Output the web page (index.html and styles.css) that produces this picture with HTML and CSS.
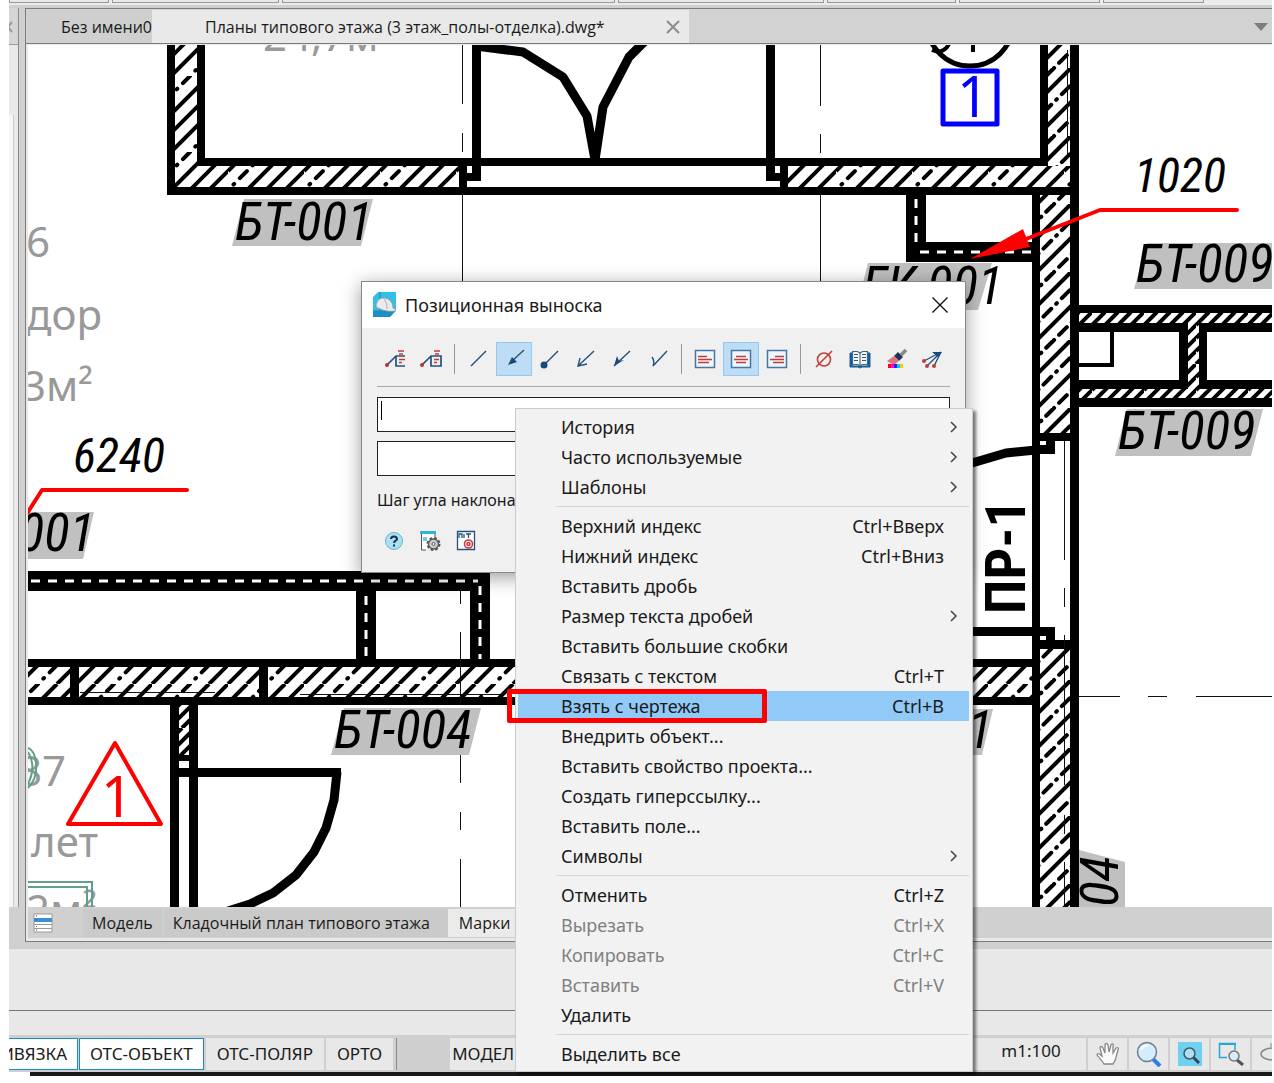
FILE: index.html
```html
<!DOCTYPE html>
<html lang="ru">
<head>
<meta charset="utf-8">
<title>Позиционная выноска</title>
<link rel="stylesheet" href="styles.css">
</head>
<body>
<div class="app">
  <div class="ribbon">
    <span class="r1"></span><span class="r2"></span><span class="r3"></span><span class="r4"></span><span class="r5"></span><span class="r6"></span><span class="r7"></span>
  </div>

  <div class="workspace">
    <aside class="side">
      <div class="side-head">
        <svg width="8" height="14" viewBox="0 0 8 14"><path d="M-6 1L3 12M3 2L-6 13" stroke="#999" stroke-width="2" fill="none"/></svg>
      </div>
      <div class="side-body"></div>
    </aside>
    <main class="document">
      <nav class="file-tabs">
        <button class="file-tab first">Без имени0</button>
        <button class="file-tab active">Планы типового этажа (3 этаж_полы-отделка).dwg*
          <svg width="14" height="14" viewBox="0 0 14 14"><path d="M1 1L13 13M13 1L1 13" stroke="#8c8c8c" stroke-width="2" fill="none"/></svg>
        </button>
        <svg class="tab-more" width="14" height="8" viewBox="0 0 14 8"><path d="M0 0H14L7 8Z" fill="#7d7d7d"/></svg>
      </nav>

      <div class="canvas">
        <svg class="plan" width="1244" height="862" viewBox="28 45 1244 862">
          <defs>
            <pattern id="hatch" width="76" height="76" patternUnits="userSpaceOnUse">
              <path d="M19 0L0 19M57 0L0 57M76 0L0 76M95 0L19 76M133 0L57 76M152 0L76 76" stroke="#000" stroke-width="4"/>
              <path d="M38 0L0 38M114 0L38 76" stroke="#000" stroke-width="4" stroke-linecap="round" stroke-dasharray="10 8 1 8"/>
            </pattern>
            <pattern id="hatch-dense" width="68" height="68" patternUnits="userSpaceOnUse">
              <path d="M17 0L0 17M51 0L0 51M85 0L17 68M119 0L51 68" stroke="#000" stroke-width="4"/>
              <path d="M34 0L0 34M68 0L0 68M102 0L34 68M136 0L68 68" stroke="#000" stroke-width="4" stroke-linecap="round" stroke-dasharray="11 7 1 7"/>
            </pattern>
            <pattern id="hatch-thin" width="52" height="52" patternUnits="userSpaceOnUse">
              <path d="M13 0L0 13M26 0L0 26M39 0L0 39M52 0L0 52M65 0L13 52M78 0L26 52M91 0L39 52M104 0L52 52" stroke="#000" stroke-width="4"/>
            </pattern>
          </defs>

          <!-- room captions -->
          <g class="room">
            <text x="263" y="51">24,7м²</text>
            <text x="26" y="257">6</text>
            <text x="26" y="330">дор</text>
            <text x="22" y="401">3м²</text>
            <text x="18" y="786">87</text>
            <text x="31" y="857">лет</text>
            <text x="26" y="925">2м²</text>
          </g>
          <path d="M28 882H92V907M28 887H87V907M28 748C38 752 40 776 28 788M28 752C34 762 34 772 28 784" class="green"/>

          <!-- tag backgrounds -->
          <path class="tag-bg" d="M244 199H373L361 246H232ZM868 263H992L978 310H856ZM1147 243H1284L1272 289H1134ZM1127 409H1263L1251 456H1115ZM-34 512H94L83 559H-46ZM344 708H481L469 755H331ZM860 709H993L982 755H850ZM1079 850L1125 862V907H1079Z"/>

          <!-- hatched walls -->
          <path fill="url(#hatch)" d="M175 45H197V166H459V187H175ZM788 166H1070V187H788ZM28 667H1032V697H28Z"/>
          <path fill="url(#hatch-dense)" d="M1048 45H1071V166H1048ZM1040 195H1070V433H1040ZM1040 649H1070V907H1040Z"/>
          <path fill="url(#hatch-thin)" d="M1079 313H1272V323H1079ZM1079 389H1272V398H1079ZM1188 323H1199V389H1188ZM179 705H189V755H179Z"/>

          <!-- wall outlines -->
          <path class="wall" d="M167 45H175V187H1070V45H1079V305H1272V313H1079V323H1188V389H1079V398H1272V407H1079V907H1070V195H1040V907H1032V195H926V242H1032V262H906V195H167Z"/>
          <path class="wall" d="M197 45H205V158H1040V45H1048V166H197Z"/>
          <path class="wall" d="M459 158H467V195H459ZM780 158H788V195H780ZM472 45H481V181H467V173H472ZM766 45H775V173H780V181H766Z"/>
          <path d="M1079 332H1179V380H1079ZM1207 332H1272V380H1207Z" fill="#fff"/>
          <path class="wall" d="M1199 323H1272V332H1207V380H1272V389H1199ZM1079 323H1188V332H1079ZM1079 380H1188V389H1079ZM1179 323H1188V389H1179Z"/>
          <path d="M1079 365H1112V332" fill="none" stroke="#000" stroke-width="4"/>
          <path class="wall" d="M28 571H490V659H1032V667H28V659H356V591H28ZM28 697H1032V705H28ZM70 659H79V705H70ZM259 659H268V705H259Z"/>
          <path d="M376 591H470V659H376Z" fill="#fff"/>
          <path class="wall" d="M170 705H179V907H170ZM189 705H198V907H189ZM179 755H189V761H179ZM170 768H341V777H170Z"/>
          <path class="wall" d="M1040 433H1070V441H1055V454H1032V445H1046V441H1040ZM972 627H1055V640H1070V649H1040V640H1046V636H972Z"/>
          <path class="ducts" d="M31 581H478M366 596V659M480 586V659"/>
          <path class="ducts" d="M916 199V248M920 252H1032"/>

          <!-- door leaves -->
          <path class="door" d="M476 46L523 52L563 77L587 116L595 160L603 107L629 57L645 41M972 463L1006 453L1036 450M337 772L334 800L326 828L314 852L296 875L273 893L250 904L228 911"/>

          <!-- axes -->
          <path class="axis" d="M462 45V104M462 133V152M462 195V290M820 45V106M820 134V153M820 195V290M460 591V604M460 632V705M460 755V783M460 812V830M460 859V907M1064 441V560M1064 588V607M1064 635V785M1064 815V834M1064 862V907M1079 696H1120M1148 696H1167M1196 696H1272M80 692H215M300 694H500M1067 50V158"/>

          <!-- round marker -->
          <circle cx="970" cy="23" r="43" fill="none" stroke="#000" stroke-width="5"/>
          <path d="M973 44V52M932 50Q943 55 949 44" stroke="#000" stroke-width="4" fill="none"/>

          <g class="tag">
            <text x="235" y="240">БТ-001</text>
            <text x="862" y="304">ГК-001</text>
            <text x="1136" y="282">БТ-009</text>
            <text x="1118" y="449">БТ-009</text>
            <text x="95" y="551" text-anchor="end">БТ-001</text>
            <text x="334" y="748">БТ-004</text>
            <text x="993" y="748" text-anchor="end">БТ-001</text>
            <text transform="translate(1118 856) rotate(-90)" text-anchor="end">БТ-004</text>
          </g>
          <g class="size">
            <text x="1134" y="192">1020</text>
            <text x="73" y="472">6240</text>
          </g>
          <text class="opening" transform="translate(1025 614) rotate(-90)">ПР-1</text>

          <rect x="943" y="71" width="54" height="53" fill="none" stroke="#00f" stroke-width="5" stroke-linejoin="round"/>
          <text class="mark" x="957" y="117" fill="#00f">1</text>

          <g class="leader">
            <path d="M1237 210H1100L1026 239M26 515L42 490H187M115 743L68 824H161Z"/>
          </g>
          <path d="M970 259L1023 229L1030 247Z" fill="#f00"/>
          <text class="mark" x="101" y="817" fill="#f00">1</text>
        </svg>
      </div>

      <nav class="sheet-tabs">
        <svg width="20" height="20" viewBox="0 0 20 20"><path d="M1 1H19V19H1Z" fill="#fff" stroke="#999"/><path d="M1 5H19V9H1Z" fill="#3c8fd0"/><path d="M1 11.500H19M1 15.500H19" stroke="#999"/><path d="M3 3H4M3 7H4M3 13.500H4M3 17H4" stroke="#456" stroke-width="1"/></svg>
        <button class="sheet">Модель</button>
        <button class="sheet">Кладочный план типового этажа</button>
        <button class="sheet active">Марки</button>
      </nav>
    </main>
  </div>

  <div class="command"></div>
  <div class="command-line"></div>

  <footer class="status">
    <button class="st on clipped">ПРИВЯЗКА</button>
    <button class="st on">ОТС-ОБЪЕКТ</button>
    <button class="st">ОТС-ПОЛЯР</button>
    <button class="st">ОРТО</button>
    <span class="st-line"></span>
    <button class="st model">МОДЕЛЬ</button>
    <div class="st-right">
      <button class="st scale">m1:100</button>
      <button class="st icon" aria-label="Панорама"><svg width="24" height="24" viewBox="0 0 24 24"><path d="M8 22C6 18 3 16 1 13C1 11 3 11 6 14L4 6C4 4 6 4 7 6L9 11L9 3C9 1 11 1 12 3L13 10L15 3C16 1 18 2 17 4L17 11L20 6C22 5 23 6 22 8L20 15C20 18 18 20 17 22Z" fill="#fafafa" stroke="#888" stroke-width="1.300"/></svg></button>
      <button class="st icon" aria-label="Масштаб"><svg width="26" height="26" viewBox="0 0 26 26"><path d="M16 17L24 25" stroke="#2a80e8" stroke-width="4"/><circle cx="11" cy="11" r="9.500" fill="#d3edfb" stroke="#6a7f92" stroke-width="1.500"/><path d="M5 9Q7 4 12 5" stroke="#fff" stroke-width="2" fill="none"/></svg></button>
      <button class="st icon" aria-label="Показать все"><svg width="24" height="24" viewBox="0 0 24 24"><path d="M0 0H24V24H0Z" fill="#6fd0f0"/><path d="M15 15L21 21" stroke="#345" stroke-width="3"/><circle cx="11.500" cy="11.500" r="5.500" fill="#a9e0f5" stroke="#456" stroke-width="1.500"/></svg></button>
      <button class="st icon" aria-label="Показать рамкой"><svg width="26" height="24" viewBox="0 0 26 24"><path d="M17 8V1.500H1.500V15.500H9" fill="none" stroke="#2aa5d5" stroke-width="1.500"/><path d="M1 1H18V3H1Z" fill="#2aa5d5"/><path d="M19 18L25 23" stroke="#555" stroke-width="3"/><circle cx="16" cy="14" r="5" fill="#d6eefa" stroke="#777" stroke-width="1.500"/></svg></button>
      <button class="st icon last" aria-label="Орбита"><svg width="24" height="24" viewBox="0 0 24 24"><ellipse cx="13" cy="12" rx="12" ry="6" fill="none" stroke="#888" stroke-width="1.500"/><path d="M11 1V5" stroke="#888"/></svg></button>
    </div>
  </footer>
  <div class="taskbar"></div>
</div>

<section class="dialog" role="dialog" aria-labelledby="dlg-title">
  <header class="dialog-head">
    <svg width="24" height="26" viewBox="0 0 24 26"><path d="M5 0H23V19L17 25H0V5Z" fill="#35bfe8"/><path d="M7 0V25M0 19H22" stroke="#1687b8" stroke-width="1"/><path d="M0 19H22L17 25H0Z" fill="#1f8ec4"/><path d="M3 15C3 8 8 5 12 6C18 7 20 12 20 16C23 17 23 18 22 19C16 20 10 19 3 15Z" fill="#e9ebec" stroke="#8b959b" stroke-width=".8"/><path d="M10 6Q14 9 14 17" stroke="#aab2b7" fill="none"/></svg>
    <h1 id="dlg-title">Позиционная выноска</h1>
    <button class="close" aria-label="Закрыть"><svg width="16" height="16" viewBox="0 0 16 16"><path d="M.5 .5L15.500 15.500M15.500 .5L.5 15.500" stroke="#111" stroke-width="1.400" fill="none"/></svg></button>
  </header>
  <div class="tools">
    <button aria-label="Выноска"><svg width="24" height="24" viewBox="0 0 24 24"><path d="M4 18L13 9H22M13 9V19H22" fill="none" stroke="#24527f" stroke-width="1.700"/><circle cx="4" cy="18" r="2" fill="#b33"/><path d="M15 4H21M16 7H20M16 12.500H22M16 15.500H19" stroke="#c33b3b" stroke-width="1.600"/></svg></button>
    <button aria-label="Выноска в рамке"><svg width="24" height="24" viewBox="0 0 24 24"><path d="M3 18L12 9H22V19H12V9" fill="none" stroke="#24527f" stroke-width="1.700"/><circle cx="3" cy="18" r="2" fill="#b33"/><path d="M15 4H21M16 7H20M15 12.500H20M15 15.500H18" stroke="#c33b3b" stroke-width="1.600"/></svg></button>
    <i></i>
    <button aria-label="Без стрелки"><svg width="24" height="24" viewBox="0 0 24 24"><path d="M5 19L20 4" class="ln"/></svg></button>
    <button class="on" aria-label="Стрелка"><svg width="24" height="24" viewBox="0 0 24 24"><path d="M9 15L22 3" class="ln"/><path d="M6 18L10 10L15 15Z" fill="#174a7c"/></svg></button>
    <button aria-label="Точка"><svg width="24" height="24" viewBox="0 0 24 24"><path d="M7 17L20 4" class="ln"/><circle cx="6" cy="18" r="3.500" fill="#174a7c"/></svg></button>
    <button aria-label="Открытая стрелка"><svg width="24" height="24" viewBox="0 0 24 24"><path d="M4 19L20 4M6 11L4 19L13 17" class="ln"/></svg></button>
    <button aria-label="Закрытая стрелка"><svg width="24" height="24" viewBox="0 0 24 24"><path d="M4 19L20 4" class="ln"/><path d="M4 19L7 9L9 14L14 13Z" fill="#174a7c"/></svg></button>
    <button aria-label="Полустрелка"><svg width="24" height="24" viewBox="0 0 24 24"><path d="M7 19L21 4M6 10Q9 14 7 19" class="ln"/></svg></button>
    <i></i>
    <button aria-label="Влево"><svg width="24" height="24" viewBox="0 0 24 24"><path d="M2.500 3.500H21.500V20.500H2.500Z" class="pg"/><path d="M5 9.500H14M5 12.500H19M5 15.500H16" class="rd"/></svg></button>
    <button class="on" aria-label="По центру"><svg width="24" height="24" viewBox="0 0 24 24"><path d="M2.500 3.500H21.500V20.500H2.500Z" class="pg"/><path d="M7 9.500H17M5 12.500H19M7 15.500H17" class="rd"/></svg></button>
    <button aria-label="Вправо"><svg width="24" height="24" viewBox="0 0 24 24"><path d="M2.500 3.500H21.500V20.500H2.500Z" class="pg"/><path d="M10 9.500H19M5 12.500H19M8 15.500H19" class="rd"/></svg></button>
    <i></i>
    <button aria-label="Диаметр"><svg width="24" height="24" viewBox="0 0 24 24"><circle cx="12" cy="12.500" r="6.500" class="rd" fill="none"/><path d="M4 20L20 4" class="rd"/></svg></button>
    <button aria-label="Справочник"><svg width="24" height="24" viewBox="0 0 24 24"><path d="M2 6H4V19H20V6H22V20H14L12 21L10 20H2Z" fill="#1b5c92" stroke="#1b5c92"/><path d="M4.500 4.500H9.500L12 6L14.500 4.500H19.500V17.500H14L12 19L10 17.500H4.500Z" fill="#eef5f8" stroke="#376b8d" stroke-width="1.200"/><path d="M12 6V18M6 7.500H10M6 10.500H10M6 13.500H10M14 7.500H18M14 10.500H18M14 13.500H18" stroke="#456"/></svg></button>
    <button aria-label="Кисть"><svg width="24" height="24" viewBox="0 0 24 24"><path d="M17 8L22 3" stroke="#888" stroke-width="3.500"/><path d="M10 9L14 5L19 10L15 14Z" fill="#20335c"/><path d="M3 14L10 9L15 14L10 18Z" fill="#e4717a"/><path d="M4 17H7V21H4Z" fill="#f00"/><path d="M7 17H10V21H7Z" fill="#f0f"/><path d="M10 17H13V21H10Z" fill="#22f"/><path d="M13 17H16V21H13Z" fill="#0ce"/><path d="M16 17H19V21H16Z" fill="#fc0"/></svg></button>
    <button aria-label="Несколько выносок"><svg width="24" height="24" viewBox="0 0 24 24"><path d="M4 14L21 5L7 19M21 5L14 19" class="ln"/><path d="M12 5H22L18 10Z" fill="#174a7c"/><circle cx="4" cy="14" r="2" fill="#c33b3b"/><circle cx="7" cy="19" r="2" fill="#c33b3b"/><circle cx="14" cy="19" r="2" fill="#c33b3b"/></svg></button>
  </div>
  <div class="fields">
    <div class="field caret"><input type="text" aria-label="Текст над полкой"></div>
    <div class="field"><input type="text" aria-label="Текст под полкой"></div>
    <div class="angle"><label for="angle">Шаг угла наклона</label><input id="angle" type="text"></div>
  </div>
  <div class="dialog-foot">
    <button aria-label="Справка"><svg width="24" height="24" viewBox="0 0 24 24"><circle cx="12" cy="12" r="8.500" fill="#a9e0f5" stroke="#6bb3cc"/><path d="M9 10C9 6.500 15 6.500 15 10C15 12 12 11.500 12 14M12 15.500V17.500" fill="none" stroke="#1d3347" stroke-width="2"/></svg></button>
    <button aria-label="Настройки"><svg width="24" height="24" viewBox="0 0 24 24"><path d="M8 21H3.500V3.500H17V8" fill="#fff" stroke="#555"/><path d="M2 2H18V5H2Z" fill="#2fb4dc"/><path d="M5 8H9V12H5Z" fill="#6fcdea"/><circle cx="15.500" cy="15" r="6" fill="none" stroke="#555" stroke-width="2" stroke-dasharray="2.700 2"/><circle cx="15.500" cy="15" r="5" fill="#ccc" stroke="#555" stroke-width="1.300"/><circle cx="15.500" cy="15" r="1.500" fill="#fff" stroke="#555"/></svg></button>
    <button aria-label="Параметры"><svg width="24" height="24" viewBox="0 0 24 24"><path d="M3.500 2.500H20.500V20.500H3.500Z" fill="#fff" stroke="#24527f" stroke-width="1.300"/><path d="M5 9V5H8V9M10 5V9M12 5H17M14.500 5V9" stroke="#24527f" stroke-width="1.300" fill="none"/><circle cx="14.500" cy="15" r="4" class="rd" fill="none"/><circle cx="14.500" cy="15" r="1.500" class="rd" fill="none"/></svg></button>
  </div>
</section>

<div class="menu" role="menu">
  <button role="menuitem">История<svg class="sub" width="8" height="12" viewBox="0 0 8 12"><path d="M1 1L6 6L1 11"/></svg></button>
  <button role="menuitem">Часто используемые<svg class="sub" width="8" height="12" viewBox="0 0 8 12"><path d="M1 1L6 6L1 11"/></svg></button>
  <button role="menuitem">Шаблоны<svg class="sub" width="8" height="12" viewBox="0 0 8 12"><path d="M1 1L6 6L1 11"/></svg></button>
  <hr>
  <button role="menuitem">Верхний индекс<kbd>Ctrl+Вверх</kbd></button>
  <button role="menuitem">Нижний индекс<kbd>Ctrl+Вниз</kbd></button>
  <button role="menuitem">Вставить дробь</button>
  <button role="menuitem">Размер текста дробей<svg class="sub" width="8" height="12" viewBox="0 0 8 12"><path d="M1 1L6 6L1 11"/></svg></button>
  <button role="menuitem">Вставить большие скобки</button>
  <button role="menuitem">Связать с текстом<kbd>Ctrl+T</kbd></button>
  <button role="menuitem" class="selected">Взять с чертежа<kbd>Ctrl+B</kbd></button>
  <button role="menuitem">Внедрить объект...</button>
  <button role="menuitem">Вставить свойство проекта...</button>
  <button role="menuitem">Создать гиперссылку...</button>
  <button role="menuitem">Вставить поле...</button>
  <button role="menuitem">Символы<svg class="sub" width="8" height="12" viewBox="0 0 8 12"><path d="M1 1L6 6L1 11"/></svg></button>
  <hr>
  <button role="menuitem">Отменить<kbd>Ctrl+Z</kbd></button>
  <button role="menuitem" disabled>Вырезать<kbd>Ctrl+X</kbd></button>
  <button role="menuitem" disabled>Копировать<kbd>Ctrl+C</kbd></button>
  <button role="menuitem" disabled>Вставить<kbd>Ctrl+V</kbd></button>
  <button role="menuitem">Удалить</button>
  <hr>
  <button role="menuitem">Выделить все</button>
</div>
</body>
</html>
```
FILE: styles.css
```css
*, *::before, *::after { box-sizing: border-box; }

body {
  margin: 0;
  position: relative;
  overflow: hidden;
  background: #fff;
  color: #1a1a1a;
  font: 17px/24px "Noto Sans", "Open Sans", sans-serif;
}

button, input {
  margin: 0;
  padding: 0;
  border: 0;
  background: none;
  color: inherit;
  font: inherit;
}

svg { display: block; flex: none; }

.app {
  display: flex;
  flex-direction: column;
  margin: 0 2px 0 9px;
  overflow: hidden;
}

/* ribbon bottom edge */
.ribbon {
  display: flex;
  gap: 3px;
  height: 8px;
  background: linear-gradient(#ececec 5px, #cfcfcf 5px);
}
.ribbon span {
  height: 3px;
  background: #e9e9e9;
  border: 1px solid #999;
  border-top: 0;
}
.r1 { width: 100px; }
.r2 { width: 167px; }
.r3 { width: 333px; }
.r4 { width: 206px; }
.r5 { width: 129px; }
.r6 { width: 141px; }
.r7 { width: 101px; }

.workspace {
  display: flex;
  background: #d0d0d0;
}
.side {
  display: flex;
  flex-direction: column;
  width: 10px;
  margin-right: 6px;
  margin-bottom: 35px;
  border-right: 1px solid #8a8a8a;
  background: #e9e9e9;
}
.side-head {
  height: 37px;
  padding-top: 12px;
  border-bottom: 1px solid #999;
  background: #d6d6d6;
}
.side-body {
  flex: 1;
  margin-top: 70px;
  margin-right: 4px;
  border-right: 1px solid #ccc;
  background: #f6f6f6;
}

.document {
  flex: 1;
  min-width: 0;
  border: 1px solid #7c7c7c;
  border-right: 0;
  background: #e8e8e8;
}

.file-tabs {
  display: flex;
  align-items: center;
  height: 35px;
  padding: 1px 4px 0 2px;
  border-bottom: 1px solid #7c7c7c;
  background: #d2d2d2;
}
.file-tab {
  display: flex;
  align-items: center;
  height: 33px;
  font: 16px/24px "Open Sans", sans-serif;
  white-space: nowrap;
}
.file-tab.first {
  width: 124px;
  padding-left: 33px;
  overflow: hidden;
  background: #cfcfcf;
}
.file-tab.active {
  justify-content: space-between;
  width: 537px;
  padding: 0 9px 0 53px;
  background: #e9e9e9;
}
.tab-more { margin-left: auto; }

.canvas {
  margin-top: 1px;
  margin-left: 2px;
  overflow: hidden;
  background: #fff;
}
.wall { fill: #000; }
.door { fill: none; stroke: #000; stroke-width: 9; stroke-linejoin: round; }
.axis { fill: none; stroke: #111; stroke-width: 1; shape-rendering: crispEdges; }
.ducts { fill: none; stroke: #fff; stroke-width: 3; stroke-dasharray: 9 8; }
.green { fill: none; stroke: #5fa08c; stroke-width: 2; }
.leader { fill: none; stroke: #f00; stroke-width: 4; stroke-linejoin: round; stroke-linecap: round; }
.tag-bg { fill: #c0c0c0; }
.tag { fill: #000; font: italic 53px "Roboto Condensed", "Noto Sans", sans-serif; }
.size { fill: #000; font: italic 48px "Roboto Condensed", "Noto Sans", sans-serif; }
.room { fill: #999; font: 42px "Noto Sans", sans-serif; }
.mark { font: 56px "Noto Sans", sans-serif; }
.opening { fill: #000; font: bold 56px "Roboto Condensed", "Roboto", sans-serif; }

.sheet-tabs {
  display: flex;
  align-items: center;
  height: 31px;
  margin-left: 2px;
  margin-bottom: 3px;
  padding-left: 5px;
  background: #d0d0d0;
}
.sheet {
  height: 28px;
  padding: 0 18px 0 9px;
  margin-right: 2px;
  background: #cacaca;
  font: 16px/24px "Open Sans", sans-serif;
}
svg + .sheet { margin-left: 30px; padding: 0 9px; }
.sheet.active { width: 200px; margin-left: -2px; padding-left: 11px; background: #ebebeb; text-align: left; }

.command {
  height: 69px;
  border-top: 7px solid #cfcfcf;
  border-bottom: 1px solid #777;
  background: #e8e8e8;
}
.command-line { height: 24px; background: #e8e8e8; }

.status {
  display: flex;
  align-items: center;
  gap: 2px;
  height: 37px;
  background: #cfcfcf;
}
.st {
  display: flex;
  align-items: center;
  justify-content: center;
  height: 32px;
  padding: 0 11px;
  background: #e8e8e8;
  white-space: nowrap;
}
.st.on { padding: 0 10px; background: #fff; border: 1px solid #1c8fb8; }
.st.on + .st.on { margin-left: -1px; }
.st.clipped { justify-content: flex-end; width: 69px; overflow: hidden; padding: 0 10px 0 0; border-left: 0; }
.st-line { width: 1px; height: 32px; margin: 0 0 0 1px; background: #888; }
.st.model { margin-left: 51px; padding: 0 2px; }
.st-right { display: flex; gap: 2px; margin-left: auto; }
.st.scale { width: 125px; padding: 0 0 6px 15px; }
.st.icon { width: 39px; padding: 0; }
.st.icon.last { width: 20px; padding-left: 8px; justify-content: flex-start; overflow: hidden; }

.taskbar { height: 4px; margin-left: 21px; background: #1a1a1e; }

/* leader dialog */
.dialog {
  position: absolute;
  left: 361px;
  top: 281px;
  width: 605px;
  border: 1px solid #888;
  background: #f0f0f0;
  box-shadow: 0 4px 18px rgba(0, 0, 0, .4);
}
.dialog-head {
  display: flex;
  align-items: center;
  gap: 8px;
  height: 46px;
  padding: 0 17px 0 11px;
  background: #fff;
}
.dialog-head h1 { margin: 0; font: 18px/24px "Noto Sans", sans-serif; }
.close { margin-left: auto; }

.tools {
  display: flex;
  align-items: center;
  height: 59px;
  margin: 0 15px;
  padding-top: 3px;
  border-bottom: 1px solid #a8a8a8;
}
.tools button {
  display: flex;
  align-items: center;
  justify-content: center;
  width: 36px;
  height: 34px;
}
.tools button.on { background: #bfdcf5; border: 1px solid #90c8f6; }
.tools i { width: 1px; height: 30px; margin: 0 5px; background: #999; }
.ln { fill: none; stroke: #24527f; stroke-width: 1.4; }
.rd { stroke: #c33b3b; stroke-width: 1.6; }
.pg { fill: #eef6fb; stroke: #4477a5; stroke-width: 1.5; }

.fields { padding: 10px 15px 0; }
.field {
  height: 35px;
  margin-bottom: 9px;
  border: 1px solid #222;
  background: #fff;
}
.field input { width: 100%; height: 100%; padding: 0 6px; }
.caret { display: flex; padding: 3px 0 0 3px; }
.caret::before { content: ""; width: 1px; height: 19px; background: #000; }
.angle {
  display: flex;
  align-items: center;
  height: 30px;
  gap: 12px;
  font-size: 16px;
}
.angle input { width: 80px; height: 24px; border: 1px solid #888; }
.dialog-foot {
  display: flex;
  gap: 12px;
  height: 57px;
  padding: 14px 20px;
}
.dialog-foot button { height: 24px; }

/* context menu */
.menu {
  position: absolute;
  left: 515px;
  top: 408px;
  width: 458px;
  padding: 3px 3px 2px 2px;
  border: 1px solid #ccc;
  background: #f2f2f2;
  box-shadow: 3px 3px 3px rgba(0, 0, 0, .5);
  font-size: 18px;
}
.menu button {
  display: flex;
  align-items: center;
  width: 100%;
  height: 30px;
  padding: 0 25px 0 43px;
}
.menu kbd { margin-left: auto; font: inherit; }
.menu button:disabled { color: #808080; }
.menu hr { height: 1px; margin: 4px 0 4px 38px; border: 0; background: #d5d5d5; }
.sub { margin-left: auto; margin-right: -14px; fill: none; stroke: #444; stroke-width: 1.5; }
.menu .selected { position: relative; background: #91c9f7; }
.selected::after {
  content: "";
  position: absolute;
  left: -11px;
  top: -2px;
  width: 260px;
  height: 34px;
  border: 5px solid #f00;
  border-radius: 2px;
}
```
